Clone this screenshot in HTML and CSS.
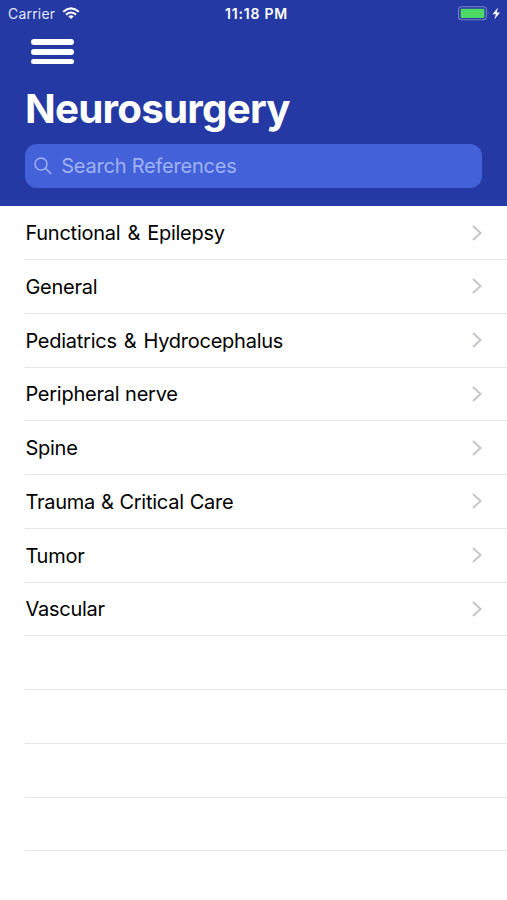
FILE: index.html
```html
<!DOCTYPE html>
<html lang="en">
<head>
<meta charset="utf-8">
<meta name="viewport" content="width=device-width, initial-scale=1">
<title>Neurosurgery</title>
<link rel="stylesheet" href="styles.css">
</head>
<body>
<header class="header">
  <div class="status">
    <div class="status-left">
      <span class="carrier">Carrier</span>
      <svg class="wifi" width="18" height="13" viewBox="0 0 18 13" fill="none" stroke="#fff" stroke-width="2.1"><path d="M1.2 4.7Q9-1.9 16.8 4.7M4 7.6Q9 3.4 14 7.6"/><path d="M6.3 9.3Q9 7.3 11.7 9.3L9 12Z" fill="#fff" stroke="none"/></svg>
    </div>
    <time class="time">11:18 PM</time>
    <svg class="battery" width="45" height="16" viewBox="0 0 45 16"><rect x=".5" y=".8" width="27.8" height="13" rx="3" fill="none" stroke="#7884c5" stroke-width="1.1"/><rect x="2.6" y="2.7" width="23.8" height="9.2" rx="1" fill="#4cd964"/><path d="M29.8 5.3Q31.6 7.3 29.8 9.3Z" fill="#7884c5"/><path d="M40 1.5L34.5 8.2H37.9L36.3 13.5L42 6.5H38.7Z" fill="#fff"/></svg>
  </div>
  <button class="menu" aria-label="Menu"><span></span><span></span><span></span></button>
  <h1 class="title">Neurosurgery</h1>
  <div class="search">
    <svg width="20" height="20" viewBox="0 0 20 20" fill="none" stroke="#a0b2f2" stroke-width="1.5" stroke-linecap="round"><circle cx="7" cy="8" r="6"/><path d="M11.4 12.4L16.8 17.5"/></svg>
    <span class="placeholder">Search References</span>
  </div>
</header>
<ul class="list">
  <li class="row"><span>Functional &amp; Epilepsy</span><svg class="chevron" viewBox="0 0 10 16"><path d="M1 1L8.6 8L1 15"/></svg></li>
  <li class="row"><span>General</span><svg class="chevron" viewBox="0 0 10 16"><path d="M1 1L8.6 8L1 15"/></svg></li>
  <li class="row"><span>Pediatrics &amp; Hydrocephalus</span><svg class="chevron" viewBox="0 0 10 16"><path d="M1 1L8.6 8L1 15"/></svg></li>
  <li class="row tight"><span>Peripheral nerve</span><svg class="chevron" viewBox="0 0 10 16"><path d="M1 1L8.6 8L1 15"/></svg></li>
  <li class="row"><span>Spine</span><svg class="chevron" viewBox="0 0 10 16"><path d="M1 1L8.6 8L1 15"/></svg></li>
  <li class="row tight"><span>Trauma &amp; Critical Care</span><svg class="chevron" viewBox="0 0 10 16"><path d="M1 1L8.6 8L1 15"/></svg></li>
  <li class="row"><span>Tumor</span><svg class="chevron" viewBox="0 0 10 16"><path d="M1 1L8.6 8L1 15"/></svg></li>
  <li class="row"><span>Vascular</span><svg class="chevron" viewBox="0 0 10 16"><path d="M1 1L8.6 8L1 15"/></svg></li>
  <li class="row"></li>
  <li class="row"></li>
  <li class="row"></li>
  <li class="row"></li>
</ul>
</body>
</html>
```
FILE: styles.css
```css
* { box-sizing: border-box; }
body {
  margin: 0;
  height: 900px;
  overflow: hidden;
  background: #fff;
  color: #000;
  font-family: Inter, "Liberation Sans", sans-serif;
}
.header {
  height: 206px;
  background: #2439a3;
  color: #fff;
}
.status {
  display: grid;
  grid-template-columns: 1fr auto 1fr;
  align-items: center;
  height: 27px;
  padding: 0 4px 0 8px;
}
.status-left { display: flex; align-items: center; gap: 6.5px; }
.carrier { font-size: 14px; letter-spacing: .2px; color: #e3e7fa; }
.time { font-size: 14px; font-weight: 600; letter-spacing: .8px; padding-left: 2px; }
.battery { justify-self: end; }
.menu {
  display: flex;
  flex-direction: column;
  gap: 4px;
  width: 43px;
  margin: 12.4px 0 0 31.4px;
  padding: 0;
  border: 0;
  background: none;
}
.menu span { height: 5.7px; width: 100%; border-radius: 3px; background: #fff; }
.title {
  margin: 19.5px 0 0 25px;
  font-size: 40.3px;
  line-height: 50px;
  font-weight: 700;
  letter-spacing: -.75px;
}
.search {
  display: flex;
  align-items: center;
  gap: 7px;
  height: 44px;
  margin: 10px 24.6px 0 25.4px;
  padding-left: 8.8px;
  border-radius: 12px;
  background: #4362da;
  color: #a0b2f2;
}
.placeholder { font-size: 20px; letter-spacing: -.22px; }
.list { margin: 0; padding: .4px 0 0 25.4px; list-style: none; }
.row {
  display: flex;
  align-items: center;
  justify-content: space-between;
  height: 53.75px;
  padding: .9px 25px 0 0;
  border-bottom: 1px solid #e6e6e8;
  font-size: 20px;
  letter-spacing: -.25px;
  word-spacing: 1.7px;
}
.row.tight { word-spacing: .5px; }
.chevron {
  width: 10px;
  height: 16px;
  margin-top: -1.2px;
  fill: none;
  stroke: #c5c5ca;
  stroke-width: 2;
}
```
